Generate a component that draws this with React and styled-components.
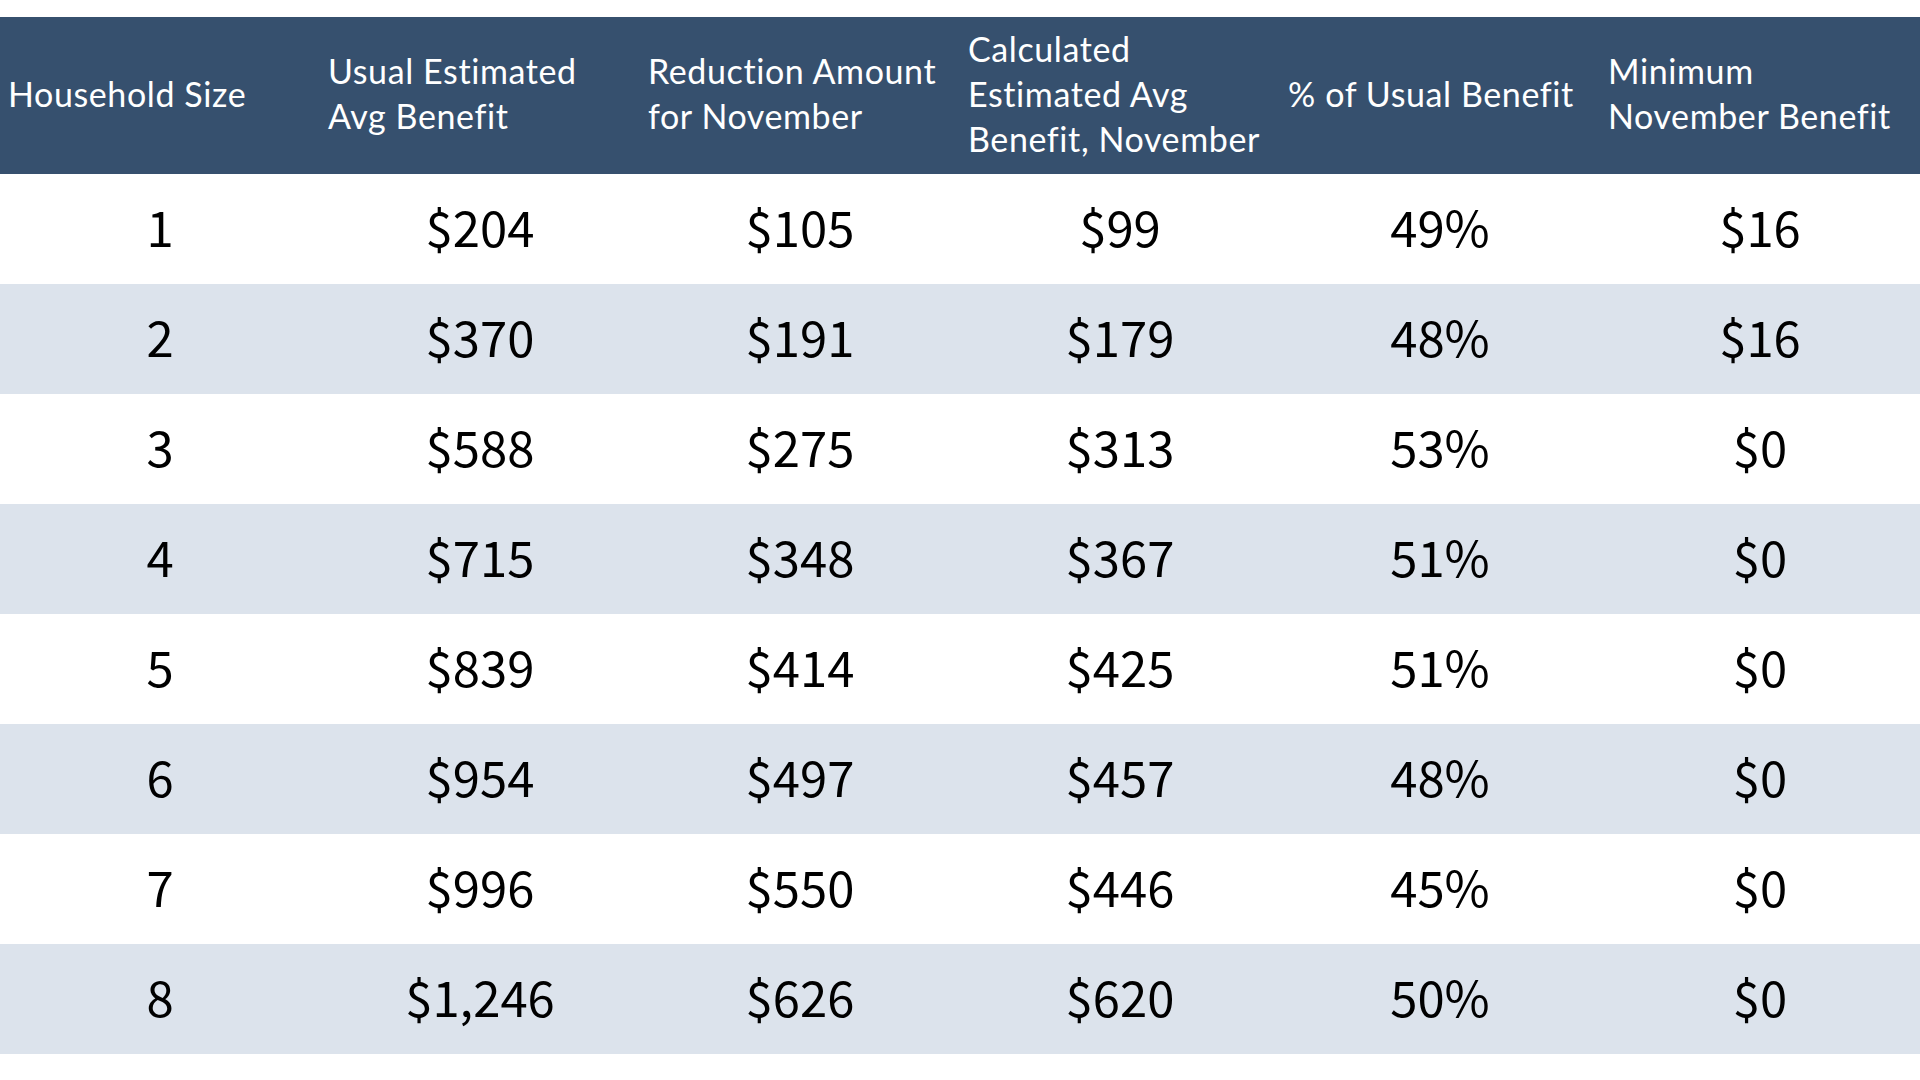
import React from 'react'
import styled, { createGlobalStyle } from 'styled-components'

const GlobalStyle = createGlobalStyle`
  html, body {
    margin: 0;
    padding: 0;
    background: #fff;
  }
`

const Page = styled.div`
  width: 1920px;
  height: 1080px;
  padding-top: 17px;
  box-sizing: border-box;
  background: #fff;
`

const Table = styled.div`
  display: grid;
  grid-template-columns: repeat(6, 320px);
`

const HeadCell = styled.div`
  background: #36506e;
  color: #fff;
  height: 157px;
  box-sizing: border-box;
  padding: 0 8px 5px;
  display: flex;
  flex-direction: column;
  justify-content: center;
  font-family: Lato, "Open Sans", sans-serif;
  font-size: 34px;
  letter-spacing: 0.6px;
  line-height: 45px;
  white-space: nowrap;
`

const Cell = styled.div`
  background: ${p => (p.$striped ? '#dce3ec' : '#fff')};
  height: 110px;
  box-sizing: border-box;
  padding-bottom: 8px;
  display: flex;
  align-items: center;
  justify-content: center;
  font-family: "Noto Sans CJK JP", "Noto Sans", sans-serif;
  font-size: 49px;
  color: #000;
`

const headers = [
  ['Household Size'],
  ['Usual Estimated', 'Avg Benefit'],
  ['Reduction Amount', 'for November'],
  ['Calculated', 'Estimated Avg', 'Benefit, November'],
  ['% of Usual Benefit'],
  ['Minimum', 'November Benefit'],
]

const rows = [
  ['1', '$204', '$105', '$99', '49%', '$16'],
  ['2', '$370', '$191', '$179', '48%', '$16'],
  ['3', '$588', '$275', '$313', '53%', '$0'],
  ['4', '$715', '$348', '$367', '51%', '$0'],
  ['5', '$839', '$414', '$425', '51%', '$0'],
  ['6', '$954', '$497', '$457', '48%', '$0'],
  ['7', '$996', '$550', '$446', '45%', '$0'],
  ['8', '$1,246', '$626', '$620', '50%', '$0'],
]

const App = () => {
  return (
    <Page>
      <GlobalStyle />
      <Table>
        {headers.map((lines, i) => (
          <HeadCell key={i}>
            {lines.map(l => <div key={l}>{l}</div>)}
          </HeadCell>
        ))}
        {rows.map((row, r) =>
          row.map((v, c) => (
            <Cell key={r + '-' + c} $striped={r % 2 === 1}>{v}</Cell>
          ))
        )}
      </Table>
    </Page>
  )
}

export default App
